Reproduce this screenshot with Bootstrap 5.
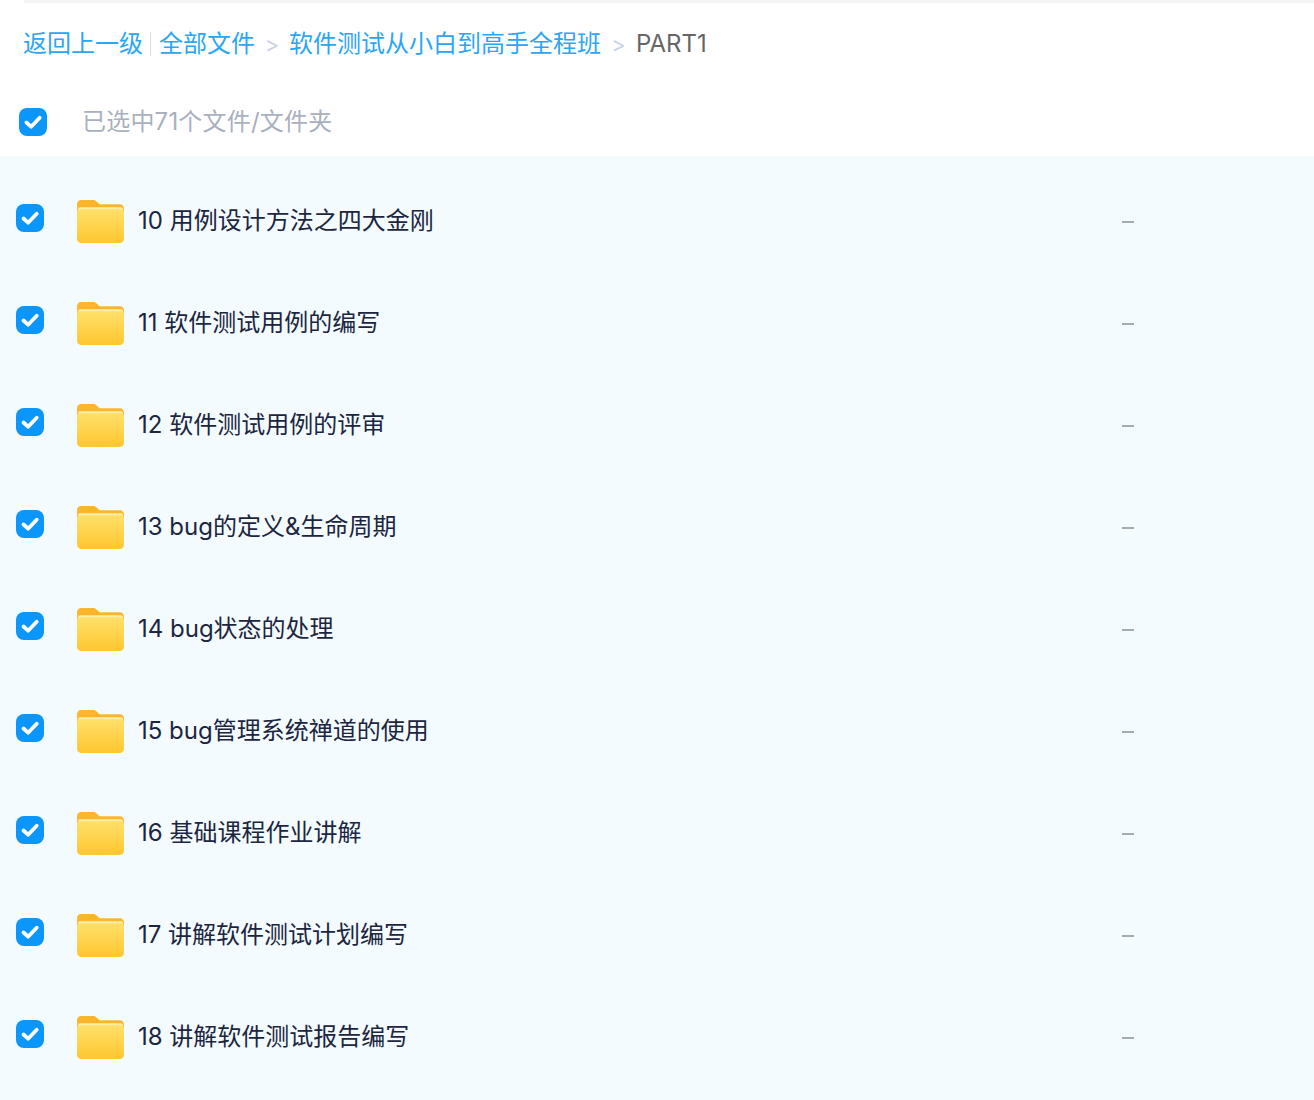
<!DOCTYPE html>
<html lang="zh-CN">

<head>
    <meta charset="UTF-8">
    <title>PART1</title>
    <meta name="viewport" content="width=device-width, initial-scale=1">
    <link href="https://cdn.jsdelivr.net/npm/bootstrap@5.3.3/dist/css/bootstrap.min.css" rel="stylesheet">

    <style>
        html, body { height: 1100px; overflow: hidden; }
        body {
            font-family: "Inter", "Noto Sans CJK SC", sans-serif;
            background: #fff;
            font-size: 24px;
        }

        .top-rule { height: 3px; margin-left: 24px; background: #f5f5f5; }

        /* breadcrumb */
        .crumbs { height: 81px; padding-left: 23px; padding-top: 1px; line-height: 1; }
        .crumbs a { color: #2aa6f5; text-decoration: none; }
        .crumb-bar { width: 1px; height: 24px; background: #d5dfe8; margin: 0 8px 0 7px; }
        .crumb-sep { color: #c6d2e2; width: 48px; text-align: center; margin: 0 -6.500px; font-size: 22px; }
        .crumb-sep-first { margin: 0 -7px; }
        .crumb-now { color: #666; }

        /* checkbox */
        .pick.form-check-input {
            width: 28px; height: 28px; margin: 0; float: none; flex: none;
            border: 0; border-radius: 8px;
            background-color: #0a96fb;
            background-size: 28px 28px;
            background-image: url("data:image/svg+xml,%3csvg xmlns='http://www.w3.org/2000/svg' viewBox='0 0 28 28'%3e%3cpath fill='none' stroke='%23fff' stroke-linecap='round' stroke-linejoin='round' stroke-width='3.8' d='M7.500 14.500l4.600 4.200 8.600-9'/%3e%3c/svg%3e");
        }

        .select-bar { height: 72px; padding-left: 19px; padding-top: 4px; }
        .select-text { color: #a9b0c0; margin-left: 35px; line-height: 1; letter-spacing: .2px; }

        /* list */
        .file-list { background: #f3fbff; padding-top: 14px; height: 944px; }
        .file-row { position: relative; height: 102px; padding-left: 16px; }
        .file-row .pick { margin-bottom: 6px; }
        .folder-ico { width: 47px; height: 43px; margin-left: 33px; margin-top: 1px; flex: none; }
        .file-name { color: #1c2640; margin-left: 14px; line-height: 1; white-space: pre; }
        .file-size { position: absolute; left: 1122px; width: 12px; height: 2px; margin-top: 1px; background: #a4adb6; }
    </style>
</head>

<body>

    <svg width="0" height="0" class="position-absolute">
        <defs>
            <linearGradient id="folderFront" x1="0" y1="0" x2="0" y2="1">
                <stop offset="0" stop-color="#ffe06a" />
                <stop offset="1" stop-color="#ffc62e" />
            </linearGradient>
            <symbol id="folder" viewBox="0 0 48 44">
                <path fill="#fdb62c" d="M4 0h12c2 0 3 .6 4.300 1.800L23 4.300h21c2.200 0 4 1.800 4 4V20H0V4c0-2.200 1.800-4 4-4z" />
                <path fill="#ffeea8" d="M3 7.500h42c1 0 2 .8 2 2V14H1V9.500c0-1.200 1-2 2-2z" />
                <path fill="url(#folderFront)" d="M3 9.500h42c1.700 0 3 1.300 3 3V40c0 2.200-1.800 4-4 4H4c-2.200 0-4-1.800-4-4V12.500c0-1.700 1.300-3 3-3z" />
            </symbol>
        </defs>
    </svg>

    <div class="top-rule"></div>

    <div class="crumbs d-flex align-items-center">
        <a href="#">返回上一级</a>
        <span class="crumb-bar"></span>
        <a href="#">全部文件</a>
        <span class="crumb-sep crumb-sep-first">&gt;</span>
        <a href="#">软件测试从小白到高手全程班</a>
        <span class="crumb-sep">&gt;</span>
        <span class="crumb-now">PART1</span>
    </div>

    <div class="select-bar d-flex align-items-center">
        <input class="form-check-input pick" type="checkbox" checked>
        <span class="select-text">已选中71个文件/文件夹</span>
    </div>

    <div class="file-list">
        <div class="file-row d-flex align-items-center">
            <input class="form-check-input pick" type="checkbox" checked>
            <svg class="folder-ico"><use href="#folder" /></svg>
            <span class="file-name">10 用例设计方法之四大金刚</span>
            <span class="file-size"></span>
        </div>
        <div class="file-row d-flex align-items-center">
            <input class="form-check-input pick" type="checkbox" checked>
            <svg class="folder-ico"><use href="#folder" /></svg>
            <span class="file-name">11 软件测试用例的编写</span>
            <span class="file-size"></span>
        </div>
        <div class="file-row d-flex align-items-center">
            <input class="form-check-input pick" type="checkbox" checked>
            <svg class="folder-ico"><use href="#folder" /></svg>
            <span class="file-name">12 软件测试用例的评审</span>
            <span class="file-size"></span>
        </div>
        <div class="file-row d-flex align-items-center">
            <input class="form-check-input pick" type="checkbox" checked>
            <svg class="folder-ico"><use href="#folder" /></svg>
            <span class="file-name">13 bug的定义&amp;生命周期</span>
            <span class="file-size"></span>
        </div>
        <div class="file-row d-flex align-items-center">
            <input class="form-check-input pick" type="checkbox" checked>
            <svg class="folder-ico"><use href="#folder" /></svg>
            <span class="file-name">14 bug状态的处理</span>
            <span class="file-size"></span>
        </div>
        <div class="file-row d-flex align-items-center">
            <input class="form-check-input pick" type="checkbox" checked>
            <svg class="folder-ico"><use href="#folder" /></svg>
            <span class="file-name">15 bug管理系统禅道的使用</span>
            <span class="file-size"></span>
        </div>
        <div class="file-row d-flex align-items-center">
            <input class="form-check-input pick" type="checkbox" checked>
            <svg class="folder-ico"><use href="#folder" /></svg>
            <span class="file-name">16 基础课程作业讲解</span>
            <span class="file-size"></span>
        </div>
        <div class="file-row d-flex align-items-center">
            <input class="form-check-input pick" type="checkbox" checked>
            <svg class="folder-ico"><use href="#folder" /></svg>
            <span class="file-name">17 讲解软件测试计划编写</span>
            <span class="file-size"></span>
        </div>
        <div class="file-row d-flex align-items-center">
            <input class="form-check-input pick" type="checkbox" checked>
            <svg class="folder-ico"><use href="#folder" /></svg>
            <span class="file-name">18 讲解软件测试报告编写</span>
            <span class="file-size"></span>
        </div>
    </div>

    <script src="https://cdn.jsdelivr.net/npm/bootstrap@5.3.3/dist/js/bootstrap.bundle.min.js"></script>
</body>

</html>
